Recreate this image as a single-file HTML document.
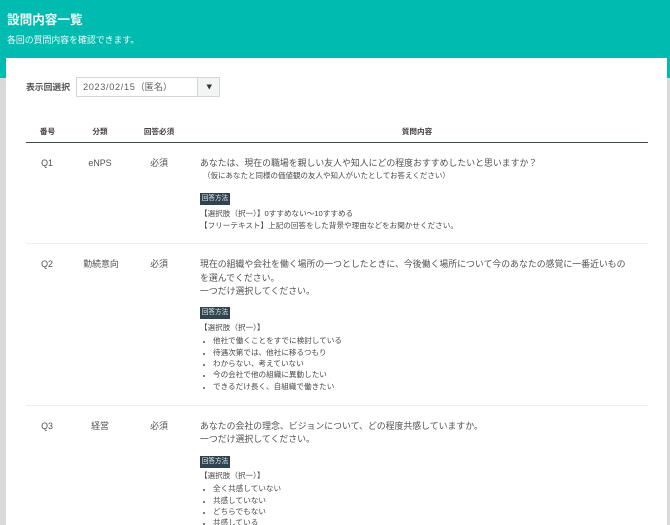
<!DOCTYPE html>
<html lang="ja"><head><meta charset="utf-8">
<style>
html,body{margin:0;padding:0;width:670px;height:525px;overflow:hidden;background:#d8dadb}
body{position:relative;font-family:"Liberation Sans","Noto Sans CJK JP",sans-serif;color:#555}
.t{position:absolute;white-space:nowrap;line-height:12px;height:12px}
.b{position:absolute}
.m{font-size:8.9px;color:#505050}
.s{font-size:7.6px;color:#484848}
.h{font-size:7.6px;font-weight:bold;color:#444}
.c{transform:translateX(-50%)}
.tag{position:absolute;left:200px;width:30px;height:12px;background:#2f444e;color:#e6ecee;font-size:6.6px;line-height:12px;text-align:center}
.dot{position:absolute;left:203px;width:2px;height:2px;border-radius:50%;background:#555}
#w{filter:blur(.25px)}
</style></head><body><div id="w">
<div class="b" style="left:0;top:0;width:670px;height:78px;background:#00bcb0"></div>
<div class="b" style="left:6px;top:58px;width:661px;height:467px;background:#fff"></div>

<div class="t" style="left:7px;top:14px;font-size:12.6px;font-weight:bold;color:#f2fbfa">設問内容一覧</div>
<div class="t" style="left:7px;top:34px;font-size:8.9px;color:#eefaf9">各回の質問内容を確認できます。</div>

<div class="t" style="left:26px;top:81px;font-size:8.8px;font-weight:bold;color:#555">表示回選択</div>
<div class="b" style="left:76px;top:77px;width:142px;height:18px;border:1px solid #d4d6d6;border-radius:1px;background:#fff"></div>
<div class="b" style="left:197px;top:78px;width:22px;height:18px;box-sizing:border-box;background:#f3f4f4;border-left:1px solid #d4d6d6"></div>
<div class="t" style="left:83px;top:81px;font-size:9.2px;color:#5f5f5f"><span style="letter-spacing:.65px">2023/02/15</span>（匿名）</div>
<svg class="b" style="left:206px;top:84px" width="7" height="6" viewBox="0 0 7 6"><path d="M0.5 0.5H6L3.25 5.5Z" fill="#333"/></svg>

<div class="t h c" style="left:47.5px;top:126px">番号</div>
<div class="t h c" style="left:100px;top:126px">分類</div>
<div class="t h c" style="left:159px;top:126px">回答必須</div>
<div class="t h c" style="left:417px;top:126px">質問内容</div>
<div class="b" style="left:26px;top:142px;width:622px;height:1px;background:#3c4a50"></div>

<div class="t m c" style="left:47px;top:157px">Q1</div>
<div class="t m c" style="left:100px;top:157px">eNPS</div>
<div class="t m c" style="left:159px;top:157px">必須</div>
<div class="t m" style="left:200px;top:157px">あなたは、現在の職場を親しい友人や知人にどの程度おすすめしたいと思いますか？</div>
<div class="t s" style="left:203px;top:170px;font-size:7.5px">（仮にあなたと同様の価値観の友人や知人がいたとしてお答えください）</div>
<div class="tag" style="top:193px">回答方法</div>
<div class="t s" style="left:200px;top:208px">【選択肢（択一）】0すすめない～10すすめる</div>
<div class="t s" style="left:200px;top:220px">【フリーテキスト】上記の回答をした背景や理由などをお聞かせください。</div>
<div class="b" style="left:26px;top:243px;width:622px;height:1px;background:#eeeeee"></div>

<div class="t m c" style="left:47px;top:258px">Q2</div>
<div class="t m c" style="left:101px;top:258px">勤続意向</div>
<div class="t m c" style="left:159px;top:258px">必須</div>
<div class="t m" style="left:200px;top:258px">現在の組織や会社を働く場所の一つとしたときに、今後働く場所について今のあなたの感覚に一番近いもの</div>
<div class="t m" style="left:200px;top:272px">を選んでください。</div>
<div class="t m" style="left:200px;top:285px">一つだけ選択してください。</div>
<div class="tag" style="top:307px">回答方法</div>
<div class="t s" style="left:200px;top:322px">【選択肢（択一）】</div>
<div class="dot" style="top:341px"></div><div class="t s" style="left:213px;top:335px">他社で働くことをすでに検討している</div>
<div class="dot" style="top:353px"></div><div class="t s" style="left:213px;top:347px">待遇次第では、他社に移るつもり</div>
<div class="dot" style="top:364px"></div><div class="t s" style="left:213px;top:358px">わからない、考えていない</div>
<div class="dot" style="top:375px"></div><div class="t s" style="left:213px;top:369px">今の会社で他の組織に異動したい</div>
<div class="dot" style="top:387px"></div><div class="t s" style="left:213px;top:381px">できるだけ長く、自組織で働きたい</div>
<div class="b" style="left:26px;top:405px;width:622px;height:1px;background:#eeeeee"></div>

<div class="t m c" style="left:47px;top:420px">Q3</div>
<div class="t m c" style="left:100px;top:420px">経営</div>
<div class="t m c" style="left:159px;top:420px">必須</div>
<div class="t m" style="left:200px;top:420px">あなたの会社の理念、ビジョンについて、どの程度共感していますか。</div>
<div class="t m" style="left:200px;top:433px">一つだけ選択してください。</div>
<div class="tag" style="top:456px">回答方法</div>
<div class="t s" style="left:200px;top:470px">【選択肢（択一）】</div>
<div class="dot" style="top:489px"></div><div class="t s" style="left:213px;top:483px">全く共感していない</div>
<div class="dot" style="top:501px"></div><div class="t s" style="left:213px;top:495px">共感していない</div>
<div class="dot" style="top:512px"></div><div class="t s" style="left:213px;top:506px">どちらでもない</div>
<div class="dot" style="top:523px"></div><div class="t s" style="left:213px;top:517px">共感している</div>
</div></body></html>
